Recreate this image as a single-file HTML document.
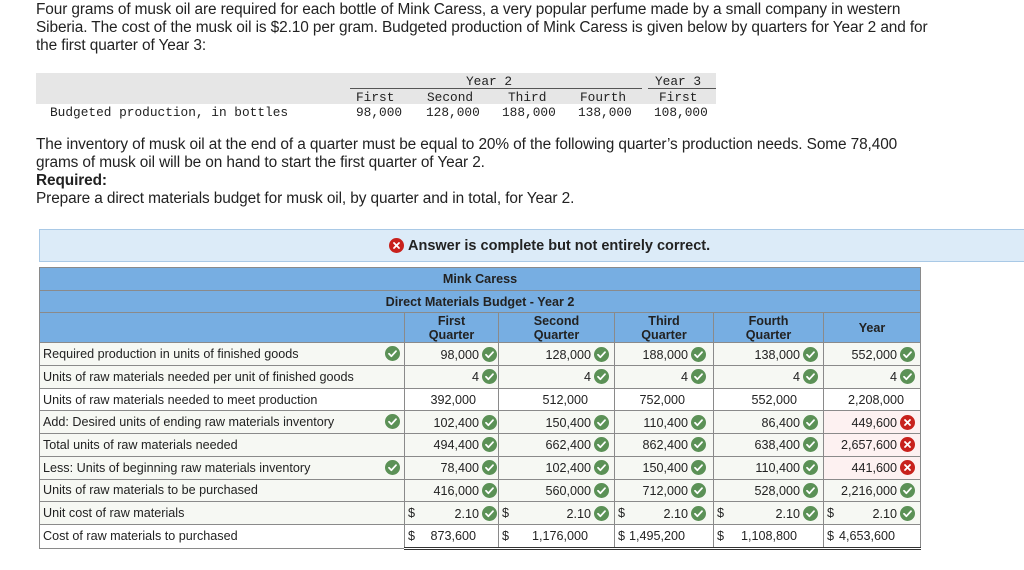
<!DOCTYPE html>
<html><head><meta charset="utf-8"><style>
body{margin:0;width:1024px;height:570px;background:#fff;position:relative;overflow:hidden;font-family:"Liberation Sans",Arial,sans-serif;color:#222}
.p{position:absolute;left:36px;font-size:15.4px;line-height:18px;margin:0;letter-spacing:-0.1px}
.mono{font-family:"Liberation Mono",monospace;font-size:12.8px;position:absolute;color:#222}
.band{position:absolute;left:36px;top:73px;width:680px;height:31px;background:#e6e6e6}
.hl{position:absolute;top:88px;height:1px;background:#555}
.call{position:absolute;left:39px;top:229px;width:990px;height:33px;background:#dcebf8;border:1px solid #a9c9e6;box-sizing:border-box}
.call span{position:absolute;left:349px;top:8px;font-weight:bold;font-size:14.5px}
.call svg{vertical-align:-3px;margin-right:4px}
table{position:absolute;left:39px;top:267px;width:881px;border-collapse:collapse;table-layout:fixed;font-size:12.6px}
td{border:1px solid #8a8a8a;padding:0;height:21.7px;position:relative;white-space:nowrap}
.h td{background:#77aee2;font-weight:bold;text-align:center;color:#222}
.g td{background:#f6f8f3}
.w td{background:#fff}
td.l{text-align:left;padding-left:3px}
td.n{text-align:right}
.c1{padding-right:1px}.c2{padding-right:5px}.c3{padding-right:7px}.c4{padding-right:5px}.c5{padding-right:5px}
.ok,.no{display:inline-block;width:15px;height:15px;vertical-align:-3px;margin-left:3px;line-height:0}
.e{background:#fdf1f1 !important}
.d{position:absolute;left:3px;top:4px}
.v{position:absolute;top:4px}
.lc{position:absolute;left:345px;top:3px;margin:0}
.r1{right:22px}.r2{right:26px}.r3{right:28px}.r4{right:26px}.r5{right:25px}.r6{right:16px}
</style></head><body>
<svg width="0" height="0" style="position:absolute"><defs>
<symbol id="ck" viewBox="0 0 15 15"><circle cx="7.5" cy="7.5" r="7.5" fill="#5b9156"/><path d="M4 7.8l2.4 2.4L11 5.2" fill="none" stroke="#fff" stroke-width="1.8" stroke-linecap="round" stroke-linejoin="round"/></symbol>
<symbol id="xx" viewBox="0 0 15 15"><circle cx="7.5" cy="7.5" r="7.5" fill="#c8211c"/><path d="M5 5l5 5M10 5l-5 5" fill="none" stroke="#fff" stroke-width="1.8" stroke-linecap="round"/></symbol>
</defs></svg>
<p class="p" style="top:1px">Four grams of musk oil are required for each bottle of Mink Caress, a very popular perfume made by a small company in western<br>Siberia. The cost of the musk oil is $2.10 per gram. Budgeted production of Mink Caress is given below by quarters for Year 2 and for<br>the first quarter of Year 3:</p>
<div class="band"></div>
<div class="hl" style="left:350px;width:292px"></div>
<div class="hl" style="left:648px;width:68px"></div>
<div class="mono" style="left:466px;top:74px">Year 2</div>
<div class="mono" style="left:655px;top:74px">Year 3</div>
<div class="mono" style="left:356px;top:90px">First</div>
<div class="mono" style="left:427px;top:90px">Second</div>
<div class="mono" style="left:508px;top:90px">Third</div>
<div class="mono" style="left:580px;top:90px">Fourth</div>
<div class="mono" style="left:659px;top:90px">First</div>
<div class="mono" style="left:50px;top:105px">Budgeted production, in bottles</div>
<div class="mono" style="left:356px;top:105px">98,000</div>
<div class="mono" style="left:426px;top:105px">128,000</div>
<div class="mono" style="left:502px;top:105px">188,000</div>
<div class="mono" style="left:578px;top:105px">138,000</div>
<div class="mono" style="left:654px;top:105px">108,000</div>
<p class="p" style="top:136px">The inventory of musk oil at the end of a quarter must be equal to 20% of the following quarter’s production needs. Some 78,400<br>grams of musk oil will be on hand to start the first quarter of Year 2.<br><b>Required:</b><br>Prepare a direct materials budget for musk oil, by quarter and in total, for Year 2.</p>
<div class="call"><span><svg width="15" height="15"><use href="#xx"/></svg>Answer is complete but not entirely correct.</span></div>
<table>
<colgroup><col style="width:365px"><col style="width:94px"><col style="width:116px"><col style="width:99px"><col style="width:110px"><col style="width:97px"></colgroup>
<tr class="h"><td colspan="6">Mink Caress</td></tr>
<tr class="h"><td colspan="6">Direct Materials Budget - Year 2</td></tr>
<tr class="h"><td style="height:29px"></td><td>First<br>Quarter</td><td>Second<br>Quarter</td><td>Third<br>Quarter</td><td>Fourth<br>Quarter</td><td>Year</td></tr>
<tr class="g"><td class="l">Required production in units of finished goods<i class="ok lc"><svg width="15" height="15"><use href="#ck"/></svg></i></td><td class="n c1">98,000<i class="ok"><svg width="15" height="15"><use href="#ck"/></svg></i></td><td class="n c2">128,000<i class="ok"><svg width="15" height="15"><use href="#ck"/></svg></i></td><td class="n c3">188,000<i class="ok"><svg width="15" height="15"><use href="#ck"/></svg></i></td><td class="n c4">138,000<i class="ok"><svg width="15" height="15"><use href="#ck"/></svg></i></td><td class="n c5">552,000<i class="ok"><svg width="15" height="15"><use href="#ck"/></svg></i></td></tr>
<tr class="g"><td class="l">Units of raw materials needed per unit of finished goods</td><td class="n c1">4<i class="ok"><svg width="15" height="15"><use href="#ck"/></svg></i></td><td class="n c2">4<i class="ok"><svg width="15" height="15"><use href="#ck"/></svg></i></td><td class="n c3">4<i class="ok"><svg width="15" height="15"><use href="#ck"/></svg></i></td><td class="n c4">4<i class="ok"><svg width="15" height="15"><use href="#ck"/></svg></i></td><td class="n c5">4<i class="ok"><svg width="15" height="15"><use href="#ck"/></svg></i></td></tr>
<tr class="w"><td class="l">Units of raw materials needed to meet production</td><td><span class="v r1">392,000</span></td><td><span class="v r2">512,000</span></td><td><span class="v r3">752,000</span></td><td><span class="v r4">552,000</span></td><td><span class="v r6">2,208,000</span></td></tr>
<tr class="g"><td class="l">Add: Desired units of ending raw materials inventory<i class="ok lc"><svg width="15" height="15"><use href="#ck"/></svg></i></td><td class="n c1">102,400<i class="ok"><svg width="15" height="15"><use href="#ck"/></svg></i></td><td class="n c2">150,400<i class="ok"><svg width="15" height="15"><use href="#ck"/></svg></i></td><td class="n c3">110,400<i class="ok"><svg width="15" height="15"><use href="#ck"/></svg></i></td><td class="n c4">86,400<i class="ok"><svg width="15" height="15"><use href="#ck"/></svg></i></td><td class="n c5 e">449,600<i class="no"><svg width="15" height="15"><use href="#xx"/></svg></i></td></tr>
<tr class="g"><td class="l">Total units of raw materials needed</td><td class="n c1">494,400<i class="ok"><svg width="15" height="15"><use href="#ck"/></svg></i></td><td class="n c2">662,400<i class="ok"><svg width="15" height="15"><use href="#ck"/></svg></i></td><td class="n c3">862,400<i class="ok"><svg width="15" height="15"><use href="#ck"/></svg></i></td><td class="n c4">638,400<i class="ok"><svg width="15" height="15"><use href="#ck"/></svg></i></td><td class="n c5 e">2,657,600<i class="no"><svg width="15" height="15"><use href="#xx"/></svg></i></td></tr>
<tr class="g"><td class="l">Less: Units of beginning raw materials inventory<i class="ok lc"><svg width="15" height="15"><use href="#ck"/></svg></i></td><td class="n c1">78,400<i class="ok"><svg width="15" height="15"><use href="#ck"/></svg></i></td><td class="n c2">102,400<i class="ok"><svg width="15" height="15"><use href="#ck"/></svg></i></td><td class="n c3">150,400<i class="ok"><svg width="15" height="15"><use href="#ck"/></svg></i></td><td class="n c4">110,400<i class="ok"><svg width="15" height="15"><use href="#ck"/></svg></i></td><td class="n c5 e">441,600<i class="no"><svg width="15" height="15"><use href="#xx"/></svg></i></td></tr>
<tr class="g"><td class="l">Units of raw materials to be purchased</td><td class="n c1">416,000<i class="ok"><svg width="15" height="15"><use href="#ck"/></svg></i></td><td class="n c2">560,000<i class="ok"><svg width="15" height="15"><use href="#ck"/></svg></i></td><td class="n c3">712,000<i class="ok"><svg width="15" height="15"><use href="#ck"/></svg></i></td><td class="n c4">528,000<i class="ok"><svg width="15" height="15"><use href="#ck"/></svg></i></td><td class="n c5">2,216,000<i class="ok"><svg width="15" height="15"><use href="#ck"/></svg></i></td></tr>
<tr class="g"><td class="l">Unit cost of raw materials</td><td class="n c1"><span class="d">$</span>2.10<i class="ok"><svg width="15" height="15"><use href="#ck"/></svg></i></td><td class="n c2"><span class="d">$</span>2.10<i class="ok"><svg width="15" height="15"><use href="#ck"/></svg></i></td><td class="n c3"><span class="d">$</span>2.10<i class="ok"><svg width="15" height="15"><use href="#ck"/></svg></i></td><td class="n c4"><span class="d">$</span>2.10<i class="ok"><svg width="15" height="15"><use href="#ck"/></svg></i></td><td class="n c5"><span class="d">$</span>2.10<i class="ok"><svg width="15" height="15"><use href="#ck"/></svg></i></td></tr>
<tr class="w"><td class="l">Cost of raw materials to purchased</td><td style="border-bottom:3px double #333"><span class="d">$</span><span class="v r1">873,600</span></td><td style="border-bottom:3px double #333"><span class="d">$</span><span class="v r2">1,176,000</span></td><td style="border-bottom:3px double #333"><span class="d">$</span><span class="v r3">1,495,200</span></td><td style="border-bottom:3px double #333"><span class="d">$</span><span class="v r4">1,108,800</span></td><td style="border-bottom:3px double #333"><span class="d">$</span><span class="v r5">4,653,600</span></td></tr>
</table>
</body></html>
